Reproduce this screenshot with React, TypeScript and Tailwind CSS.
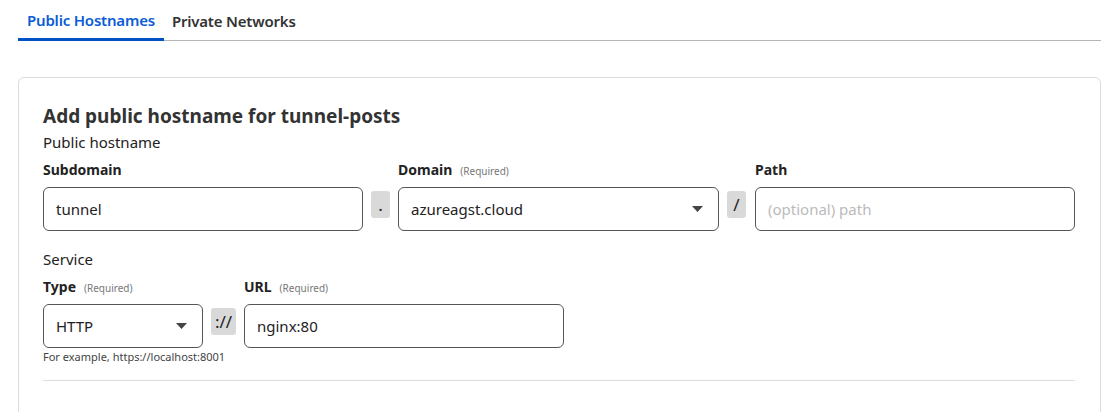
import React from "react";

const font = { fontFamily: '"Noto Sans", "Open Sans", sans-serif' };

function Caret() {
  return (
    <svg width="11" height="6" viewBox="0 0 11 6" className="shrink-0">
      <path d="M0 0 L11 0 L5.5 6 Z" fill="#444" />
    </svg>
  );
}

function Sep({ children, w = "w-[19px]" }: { children: React.ReactNode; w?: string }) {
  return (
    <div className={`${w} h-[27px] mt-[4px] rounded-[3px] bg-[#d9d9d9] flex items-center justify-center text-[17px] text-[#222] leading-none`}>
      {children}
    </div>
  );
}

function Label({ text, req }: { text: string; req?: boolean }) {
  return (
    <div className="h-[22px] flex items-baseline gap-[8px] mb-[6px]">
      <span className="text-[14px] font-bold text-[#222] leading-[22px]">{text}</span>
      {req && <span className="text-[10px] text-[#777]">(Required)</span>}
    </div>
  );
}

function Box({ children, w = "w-[320px]", select }: { children?: React.ReactNode; w?: string; select?: boolean }) {
  return (
    <div className={`${w} h-[44px] border border-[#555] rounded-[6px] bg-white flex items-center pl-[12px] pr-[15px] justify-between text-[15px] text-[#222]`}>
      <span>{children}</span>
      {select && <Caret />}
    </div>
  );
}

export default function App() {
  return (
    <div className="bg-white w-[1115px] h-[412px] overflow-hidden pl-[18px] pr-[14px]" style={font}>
      <div className="flex h-[41px] border-b border-[#b5b5b5] items-stretch">
        <div className="px-[9px] flex items-center text-[15px] font-semibold tracking-[-0.2px] text-[#0b5cd5] border-b-[3px] border-[#0051c3] -mb-[1px] pt-[2px]">
          Public Hostnames
        </div>
        <div className="px-[8px] flex items-center text-[15px] font-semibold tracking-[-0.2px] text-[#333] pt-[3px]">
          Private Networks
        </div>
      </div>
      <div className="mt-[36px] border border-[#dcdcdc] rounded-[6px] pl-[24px] pr-[25px] pt-[24px] h-[400px]">
        <h2 className="text-[19px] font-bold text-[#333] leading-[28px]">Add public hostname for tunnel-posts</h2>
        <div className="text-[15px] text-[#222] leading-[22px] mt-[1px] mb-[6px]">Public hostname</div>
        <div className="flex gap-[8px]">
          <div>
            <Label text="Subdomain" />
            <Box>tunnel</Box>
          </div>
          <div className="pt-[28px]">
            <Sep>.</Sep>
          </div>
          <div>
            <Label text="Domain" req />
            <Box w="w-[321px]" select>azureagst.cloud</Box>
          </div>
          <div className="pt-[28px] mr-[1px]">
            <Sep>/</Sep>
          </div>
          <div>
            <Label text="Path" />
            <Box>
              <span className="text-[#bbb]">(optional) path</span>
            </Box>
          </div>
        </div>
        <div className="text-[15px] text-[#222] leading-[22px] mt-[17px] mb-[6px]">Service</div>
        <div className="flex gap-[8px]">
          <div className="w-[160px]">
            <Label text="Type" req />
            <Box w="w-[160px]" select>HTTP</Box>
            <div className="text-[11px] text-[#444] mt-[1px] whitespace-nowrap">For example, https://localhost:8001</div>
          </div>
          <div className="pt-[28px]">
            <Sep w="w-[25px]">://</Sep>
          </div>
          <div>
            <Label text="URL" req />
            <Box>nginx:80</Box>
          </div>
        </div>
        <div className="border-t border-[#dcdcdc] mt-[14px]" />
      </div>
    </div>
  );
}
